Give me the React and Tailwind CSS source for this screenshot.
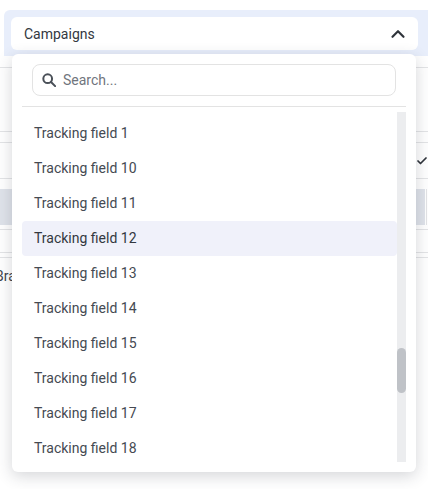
import React from 'react'
import { ChevronUp, Check } from 'lucide-react'

const fields = [1, 10, 11, 12, 13, 14, 15, 16, 17, 18]

const Row = ({ className = '', children }) => (
  <div className={`border-b border-[#e3e4e6] ${className}`}>{children}</div>
)

const App = () => {
  return (
    <div className="relative h-[489px] w-[428px] overflow-hidden bg-white font-['Roboto',sans-serif] text-sm text-[#454a52]">
      {/* page behind the menu */}
      <div className="pt-[10px]">
        <div className="ml-[4px] h-[46px] rounded-tl-md bg-[#e8eefb] pl-[7px] pr-[10px] pt-[7px]">
          <button className="flex h-[33px] w-full items-center justify-between rounded-md bg-white pl-[13px] pr-[9px] text-[#33383f]">
            <span>Campaigns</span>
            <ChevronUp className="mt-[1px] h-[22px] w-[22px] text-[#2f343b]" strokeWidth={2.4} />
          </button>
        </div>
        <Row className="h-[12px]" />
        <Row className="h-[64px]" />
        <Row className="h-[11px]" />
        <Row className="flex h-[36px] items-center justify-end">
          <Check className="h-[12px] w-[12px] text-[#2f343b]" strokeWidth={3.5} />
        </Row>
        <div className="h-[10px]" />
        <div className="flex h-[36px] justify-between">
          <div className="w-[12px] bg-[#dfe3ea]" />
          <div className="mr-[1px] border-r border-[#e3e4e6] pr-[1px]">
            <div className="h-full w-[9px] bg-[#dfe3ea]" />
          </div>
        </div>
        <Row className="h-[5px]" />
        <Row className="h-[23px]" />
        <Row className="h-[5px]" />
        <div className="-ml-[5px] mt-[8px] text-[#3f444c]">Brand</div>
      </div>

      {/* dropdown menu */}
      <div className="absolute left-[12px] top-[54px] h-[418px] w-[404px] rounded-md bg-white shadow-[0_4px_16px_rgba(40,44,60,0.2)]">
        <div className="mx-[10px] border-b border-[#e3e3e3] px-[10px] pb-[10px] pt-[10px]">
          <div className="flex h-[32px] items-center gap-[7px] rounded-lg border border-[#e3e3e3] pl-[9px]">
            <svg viewBox="0 0 16 16" className="h-[14px] w-[14px] fill-none stroke-[#4a5058]" strokeWidth="2.3">
              <circle cx="6.5" cy="6.5" r="5" />
              <path d="M10.3 10.3 15 15" strokeLinecap="round" />
            </svg>
            <span className="text-[#70757d]">Search...</span>
          </div>
        </div>
        <div className="mx-[10px] mt-[5px] flex h-[350px] overflow-hidden">
          <div className="min-w-0 flex-1 pt-[4px]">
            {fields.map((n) => (
              <div
                key={n}
                className={`flex h-[35px] shrink-0 items-center rounded-[4px] pb-[2px] pl-[12px] ${n === 12 ? 'bg-[#f0f1fa] text-[#33383f]' : ''}`}
              >
                Tracking field {n}
              </div>
            ))}
          </div>
          <div className="relative w-[9px] bg-[#ecedef]">
            <div className="absolute left-0 top-[236px] h-[45px] w-[9px] rounded-full bg-[#bfc2c7]" />
          </div>
        </div>
      </div>
    </div>
  )
}

export default App
